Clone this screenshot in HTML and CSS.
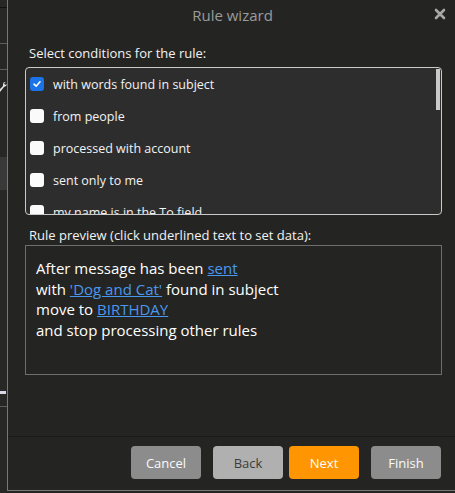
FILE: index.html
```html
<!DOCTYPE html>
<html>
<head>
<meta charset="utf-8">
<link rel="stylesheet" href="styles.css">
</head>
<body>
<div class="screen">
  <div class="strip">
    <div class="s-top"></div>
    <div class="s-a"></div>
    <div class="s-b"></div>
    <div class="s-tool"><svg width="7" height="14" viewBox="0 0 7 14"><path d="M0 12 L4 7 L6 6 L7 4 L5 5 L4 3 L6 2 L4 2 L3 4 L3 6 L-1 10 Z" fill="#e6e6e6"/></svg></div>
    <div class="s-c"></div>
    <div class="s-panel"></div>
    <div class="s-d"></div>
    <div class="s-mark"></div>
    <div class="s-e"></div>
  </div>
  <div class="dialog">
    <div class="titlebar">
      <span class="title">Rule wizard</span>
      <span class="close">
        <svg width="12" height="12" viewBox="0 0 12 12"><path d="M2 2 L10 10 M10 2 L2 10" stroke="#a8a8a8" stroke-width="2.6" stroke-linecap="round"/></svg>
      </span>
    </div>
    <div class="content">
      <div class="label">Select conditions for the rule:</div>
      <div class="listbox">
        <div class="list">
          <div class="row"><span class="cb checked"><svg width="10" height="10" viewBox="0 0 10 10"><path d="M2 5.2 L4.1 7.2 L8 2.8" fill="none" stroke="#fff" stroke-width="1.6" stroke-linecap="round" stroke-linejoin="round"/></svg></span><span>with words found in subject</span></div>
          <div class="row"><span class="cb"></span><span>from people</span></div>
          <div class="row"><span class="cb"></span><span>processed with account</span></div>
          <div class="row"><span class="cb"></span><span>sent only to me</span></div>
          <div class="row"><span class="cb"></span><span>my name is in the To field</span></div>
        </div>
        <div class="thumb"></div>
      </div>
      <div class="label label2">Rule preview (click underlined text to set data):</div>
      <div class="preview">
        <div>After message has been <a class="lnk">sent</a></div>
        <div>with <a class="lnk">'Dog and Cat'</a> found in subject</div>
        <div>move to <a class="lnk">BIRTHDAY</a></div>
        <div>and stop processing other rules</div>
      </div>
    </div>
    <div class="footer">
      <button class="btn grey">Cancel</button>
      <button class="btn light">Back</button>
      <button class="btn orange">Next</button>
      <button class="btn grey finish">Finish</button>
    </div>
  </div>
</div>
</body>
</html>
```
FILE: styles.css
```css
html, body {
  margin: 0;
  padding: 0;
  background: #242523;
  font-family: "Open Sans", "Noto Sans", sans-serif;
}
.screen {
  display: flex;
  width: 455px;
  height: 493px;
  overflow: hidden;
}
.strip {
  width: 7px;
  flex: none;
  display: flex;
  flex-direction: column;
  background: #272826;
}
.s-top { height: 7px; border-bottom: 1px solid #111; }
.s-a { height: 35px; border-bottom: 1px solid #5e5e5e; }
.s-b { height: 25px; border-bottom: 1px solid #5e5e5e; }
.s-tool { height: 24px; display: flex; align-items: flex-end; }
.s-c { height: 63px; }
.s-panel { height: 33px; background: #393939; }
.s-d { height: 201px; }
.s-mark { height: 3px; background: #d8d8e8; margin-right: 1px; }
.s-e { height: 12px; border-bottom: 1px solid #5e5e5e; }

.dialog {
  width: 447px;
  height: 490px;
  flex: none;
  border-left: 1px solid #787878;
  border-bottom: 1px solid #787878;
  background: #242523;
  display: flex;
  flex-direction: column;
}
.titlebar {
  height: 43px;
  flex: none;
  position: relative;
  display: flex;
  align-items: flex-start;
  justify-content: center;
  box-sizing: border-box;
  padding-top: 5px;
}
.title {
  color: #9b9b9b;
  font-size: 15px;
  line-height: 21px;
  margin-left: 2px;
}
.close {
  position: absolute;
  right: 9px;
  top: 8px;
  display: flex;
}
.content {
  padding: 0 13px 0 17px;
  flex: 1;
}
.label {
  color: #f2f2f2;
  font-size: 13px;
  padding-left: 4px;
  height: 24px;
  line-height: 20px;
}
.listbox {
  position: relative;
  height: 146px;
  border: 1px solid #c9c9c9;
  border-radius: 4px;
  background: #2d2d2d;
  overflow: hidden;
}
.list {
  display: flex;
  flex-direction: column;
}
.row {
  height: 32px;
  display: flex;
  align-items: center;
  gap: 9px;
  padding-left: 4px;
  color: #f2f2f2;
  font-size: 12.5px;
  flex: none;
}
.cb {
  width: 14px;
  height: 14px;
  border-radius: 3px;
  background: #fafafa;
  flex: none;
  display: flex;
  align-items: center;
  justify-content: center;
}
.cb.checked { background: #1a73e8; }
.thumb {
  position: absolute;
  right: 1px;
  top: 1px;
  width: 4px;
  height: 41px;
  background: #c9c9c9;
}
.label2 {
  margin-top: 11px;
  height: 19px;
  line-height: 19px;
}
.preview {
  height: 104px;
  border: 1px solid #6e6e6e;
  padding: 12px 10px;
  color: #ffffff;
  font-size: 15px;
  line-height: 20.5px;
}
.lnk {
  color: #4a97f0;
  text-decoration: underline;
}
.footer {
  height: 44px;
  flex: none;
  border-top: 1px solid #1a1a1a;
  display: flex;
  align-items: flex-start;
  padding: 9px 14px 0 0;
  justify-content: flex-end;
}
.btn {
  width: 70px;
  height: 33px;
  border: none;
  border-radius: 4px;
  font-family: inherit;
  font-size: 13px;
  margin-left: 12px;
  padding: 0;
}
.btn.grey { background: #8c8c8c; color: #fafafa; }
.btn.light { background: #b0b0b0; color: #3c3c3c; }
.btn.orange { background: #ff9500; color: #ffffff; margin-left: 6px; }
```
